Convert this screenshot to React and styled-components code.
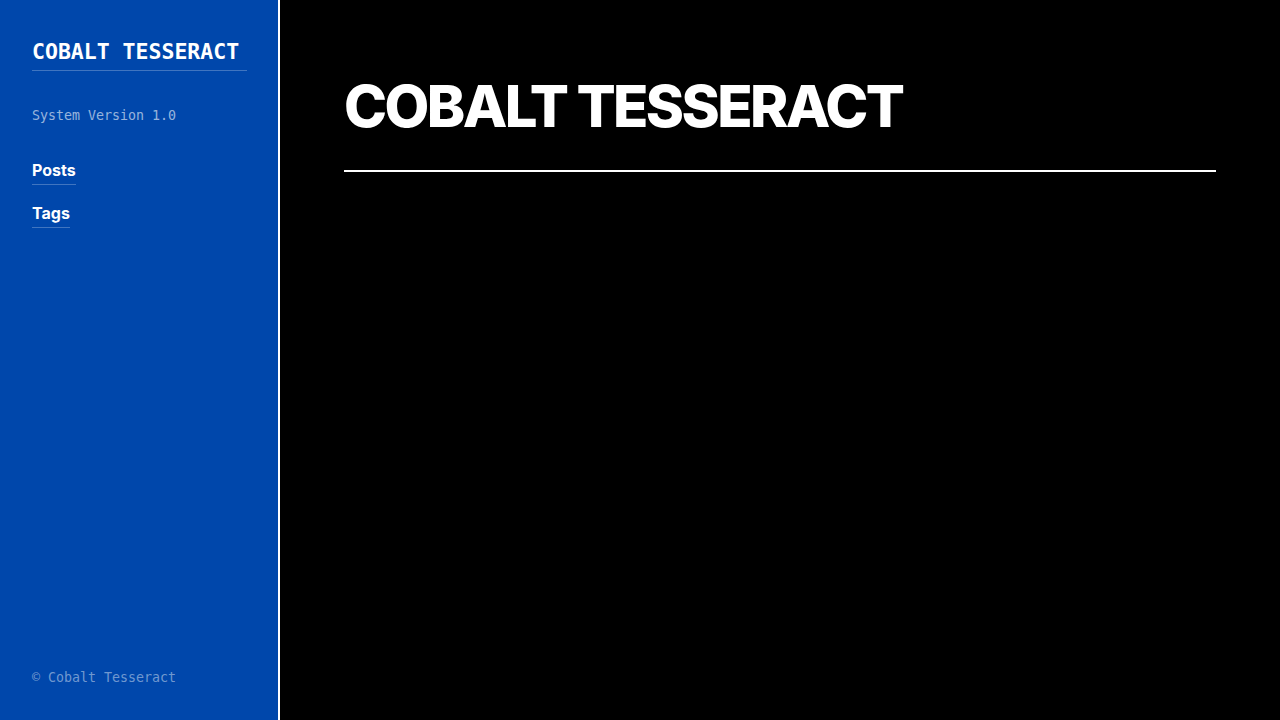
import React from 'react'
import styled, { createGlobalStyle } from 'styled-components'

const GlobalStyle = createGlobalStyle`
  html, body {
    margin: 0;
    padding: 0;
    background: #000;
  }
  * {
    box-sizing: border-box;
  }
`

const Layout = styled.div`
  display: flex;
  width: 100%;
  height: 100vh;
  font-family: Inter, 'Noto Sans', sans-serif;
`

const Sidebar = styled.aside`
  width: 280px;
  flex-shrink: 0;
  display: flex;
  flex-direction: column;
  padding: 39px 32px 34px;
  background: #0047ab;
  border-right: 2px solid #fff;
  color: #fff;
`

const Logo = styled.a`
  align-self: flex-start;
  display: inline-block;
  padding: 0 8px 5px 0;
  font-family: 'DejaVu Sans Mono', 'Liberation Mono', monospace;
  font-size: 21.5px;
  font-weight: 700;
  line-height: 1.2;
  white-space: nowrap;
  color: #fff;
  text-decoration: none;
  border-bottom: 1px solid rgba(255, 255, 255, 0.25);
`

const Version = styled.p`
  margin: 37px 0 0;
  font-family: 'DejaVu Sans Mono', 'Liberation Mono', monospace;
  font-size: 13.3px;
  line-height: 1.2;
  color: rgba(255, 255, 255, 0.6);
`

const Nav = styled.nav`
  display: flex;
  flex-direction: column;
  align-items: flex-start;
  gap: 18px;
  margin-top: 36px;
`

const NavLink = styled.a`
  padding-bottom: 4px;
  font-size: 16px;
  font-weight: 700;
  line-height: 20px;
  color: #fff;
  text-decoration: none;
  border-bottom: 1px solid rgba(255, 255, 255, 0.25);
`

const Footer = styled.footer`
  margin-top: auto;
  font-family: 'DejaVu Sans Mono', 'Liberation Mono', monospace;
  font-size: 13.3px;
  line-height: 1.2;
  color: rgba(255, 255, 255, 0.45);
`

const Main = styled.main`
  flex: 1;
  padding: 75px 64px;
  background: #000;
  color: #fff;
`

const Header = styled.header`
  padding-bottom: 31px;
  border-bottom: 2px solid #fff;
`

const Title = styled.h1`
  margin: 0;
  font-size: 58px;
  font-weight: 800;
  line-height: 1.1;
  letter-spacing: -0.045em;
`

export default function App() {
  return (
    <>
      <GlobalStyle />
      <Layout>
        <Sidebar>
          <Logo href="#">COBALT TESSERACT</Logo>
          <Version>System Version 1.0</Version>
          <Nav>
            <NavLink href="#">Posts</NavLink>
            <NavLink href="#">Tags</NavLink>
          </Nav>
          <Footer>© Cobalt Tesseract</Footer>
        </Sidebar>
        <Main>
          <Header>
            <Title>COBALT TESSERACT</Title>
          </Header>
        </Main>
      </Layout>
    </>
  )
}
